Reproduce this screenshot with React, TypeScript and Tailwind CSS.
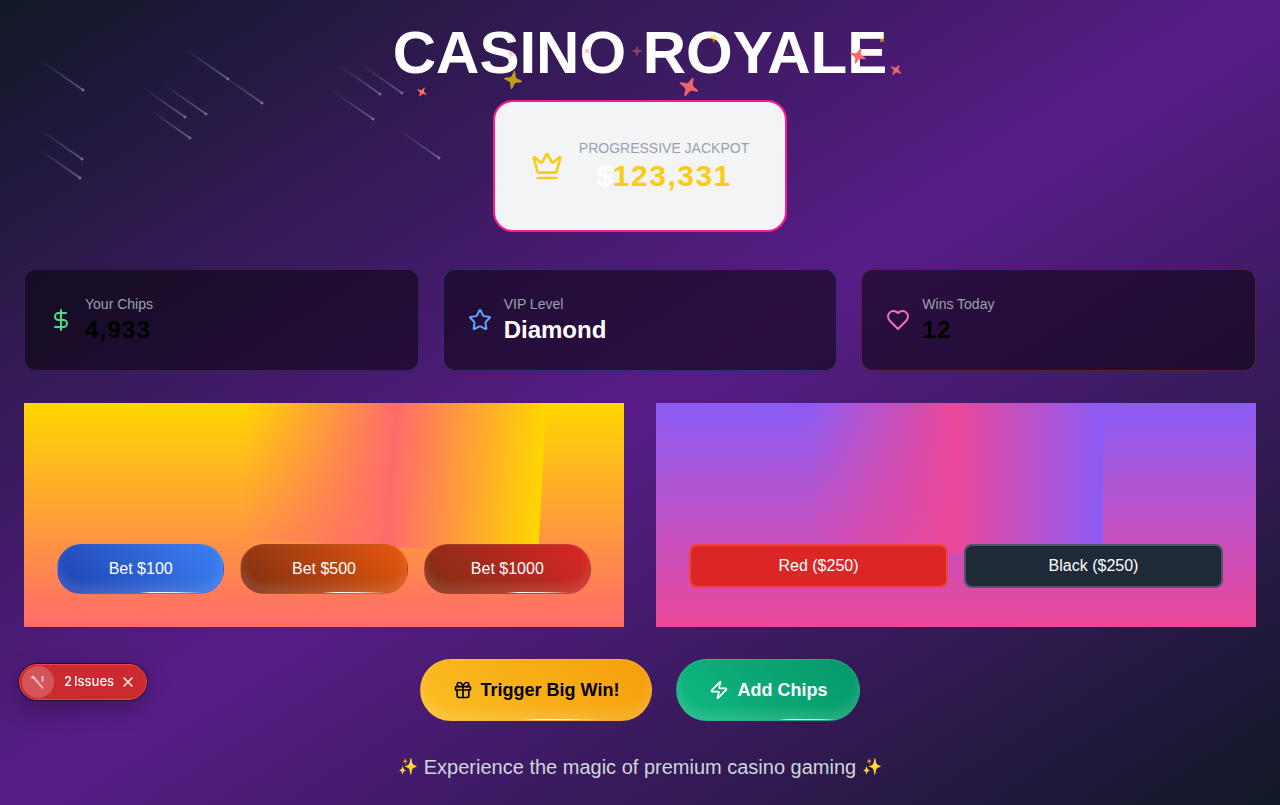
import type { ReactNode } from "react";
import { Crown, DollarSign, Gift, Star, X, Zap } from "lucide-react";

type Point = [number, number];

const METEORS: Point[] = [
  [83, 90], [228, 79], [262, 103], [185, 117], [206, 114], [190, 138],
  [380, 94], [402, 93], [373, 119], [439, 158], [82, 159], [80, 178],
];

const SPARKLES = [
  { x: 422, y: 92, r: 5, turn: 30, color: "#ff6b6b", alpha: 1 },
  { x: 513, y: 80, r: 9, turn: 10, color: "#ffd700", alpha: 0.7 },
  { x: 511, y: 54, r: 4, turn: 30, color: "#ff6b6b", alpha: 0.4 },
  { x: 587, y: 51, r: 3, turn: 45, color: "#ff6b6b", alpha: 0.5 },
  { x: 637, y: 51, r: 5, turn: 0, color: "#ff6b6b", alpha: 0.45 },
  { x: 689, y: 87, r: 10, turn: 25, color: "#ff6b6b", alpha: 0.9 },
  { x: 714, y: 38, r: 5, turn: 5, color: "#ffd700", alpha: 0.5 },
  { x: 787, y: 53, r: 2, turn: 0, color: "#ff6b6b", alpha: 0.45 },
  { x: 858, y: 56, r: 8, turn: 20, color: "#ff6b6b", alpha: 1 },
  { x: 882, y: 40, r: 3, turn: 40, color: "#ffd700", alpha: 0.7 },
  { x: 896, y: 70, r: 6, turn: 35, color: "#ff6b6b", alpha: 0.9 },
];

const SPARKLE_PATH =
  "M9.82531 0.843845C10.0553 0.215178 10.9446 0.215178 11.1746 0.843845L11.8618 2.72026C12.4006 4.19229 12.3916 6.39157 13.5 7.5C14.6084 8.60843 16.8077 8.59935 18.2797 9.13822L20.1561 9.82534C20.7858 10.0553 20.7858 10.9447 20.1561 11.1747L18.2797 11.8618C16.8077 12.4007 14.6084 12.3916 13.5 13.5C12.3916 14.6084 12.4006 16.8077 11.8618 18.2798L11.1746 20.1562C10.9446 20.7858 10.0553 20.7858 9.82531 20.1562L9.13819 18.2798C8.59932 16.8077 8.60843 14.6084 7.5 13.5C6.39157 12.3916 4.19225 12.4007 2.72023 11.8618L0.843814 11.1747C0.215148 10.9447 0.215148 10.0553 0.843814 9.82534L2.72023 9.13822C4.19225 8.59935 6.39157 8.60843 7.5 7.5C8.60843 6.39157 8.59932 4.19229 9.13819 2.72026L9.82531 0.843845Z";

function Meteors() {
  return (
    <svg className="pointer-events-none absolute left-0 top-0" width="520" height="200" aria-hidden="true">
      {METEORS.map(([x, y], i) => (
        <g key={i} transform={`translate(${x} ${y}) rotate(35)`}>
          <rect x="-50" y="-0.8" width="50" height="1.6" fill="url(#meteor-tail)" />
          <circle r="1.5" fill="#64748b" />
        </g>
      ))}
      <defs>
        <linearGradient id="meteor-tail">
          <stop offset="0" stopColor="#64748b" stopOpacity="0" />
          <stop offset="1" stopColor="#64748b" stopOpacity="0.8" />
        </linearGradient>
      </defs>
    </svg>
  );
}

function Sparkles() {
  return (
    <svg
      className="pointer-events-none absolute left-1/2 top-0 -translate-x-1/2"
      width="540"
      height="110"
      viewBox="370 0 540 110"
      aria-hidden="true"
    >
      {SPARKLES.map((s, i) => (
        <path
          key={i}
          transform={`translate(${s.x} ${s.y}) rotate(${s.turn}) scale(${s.r / 10}) translate(-10.5 -10.5)`}
          fill={s.color}
          fillOpacity={s.alpha}
          d={SPARKLE_PATH}
        />
      ))}
    </svg>
  );
}

function HeartIcon() {
  return (
    <svg
      className="size-6 text-[#f472b6]"
      viewBox="0 0 24 24"
      fill="none"
      stroke="currentColor"
      strokeWidth="2"
      strokeLinecap="round"
      strokeLinejoin="round"
      aria-hidden="true"
    >
      <path d="M19 14c1.49-1.46 3-3.21 3-5.5A5.5 5.5 0 0 0 16.5 3c-1.76 0-3 .5-4.5 2-1.5-1.5-2.74-2-4.5-2A5.5 5.5 0 0 0 2 8.5c0 2.3 1.5 4.05 3 5.5l7 7Z" />
    </svg>
  );
}

function StatCard({ icon, label, border, children }: { icon: ReactNode; label: string; border: string; children: ReactNode }) {
  return (
    <div className={`flex items-center gap-3 rounded-xl border bg-black/50 p-6 ${border}`}>
      {icon}
      <div>
        <p className="text-sm text-gray-400">{label}</p>
        {children}
      </div>
    </div>
  );
}

function ShimmerButton({ className, line, children }: { className: string; line: string; children: ReactNode }) {
  return (
    <button
      type="button"
      className={`relative flex items-center justify-center overflow-hidden border border-white/10 shadow-[inset_0_-8px_10px_#ffffff1f] ${className}`}
    >
      {children}
      <span className={`absolute bottom-0 h-px bg-[linear-gradient(90deg,transparent,#fff_20%,#ffffffcc_60%,transparent)] ${line}`} />
    </button>
  );
}

const BET = "flex-1 rounded-3xl px-6 py-3 text-base text-white";
const ACTION = "gap-2 rounded-full px-8 py-4 text-lg font-bold";

export default function App() {
  return (
    <div className="relative min-h-screen overflow-hidden bg-[linear-gradient(to_bottom_right,#111827,#581c87,#111827)] p-6 font-['Liberation_Sans',Arial,sans-serif]">
      <Meteors />

      <header className="mb-[37px] flex flex-col items-center">
        <h1 className="mb-[18px] text-6xl leading-[58px] font-bold text-white">CASINO ROYALE</h1>
        <div className="flex items-center gap-4 rounded-[20px] border-2 border-[#ff1a8c] bg-gray-100 p-9">
          <Crown className="size-8 text-[#facc15]" />
          <div className="text-center">
            <p className="text-sm text-gray-400">PROGRESSIVE JACKPOT</p>
            <p className="text-3xl leading-9 font-bold text-white">
              $<span className="tracking-wider text-[#facc15]">123,331</span>
            </p>
          </div>
        </div>
      </header>
      <Sparkles />

      <section className="mb-8 grid grid-cols-3 gap-6">
        <StatCard label="Your Chips" border="border-[#a855f733]" icon={<DollarSign className="size-6 text-[#4ade80]" />}>
          <p className="text-2xl font-bold tracking-wider text-black">4,933</p>
        </StatCard>
        <StatCard label="VIP Level" border="border-[#3b82f64d]" icon={<Star className="size-6 text-[#60a5fa]" />}>
          <p className="text-2xl font-bold text-white">Diamond</p>
        </StatCard>
        <StatCard label="Wins Today" border="border-[#ef44444d]" icon={<HeartIcon />}>
          <p className="text-2xl font-bold tracking-wider text-black">12</p>
        </StatCard>
      </section>

      <main className="mb-8 grid grid-cols-2 gap-8">
        <section className="relative overflow-hidden bg-[linear-gradient(#ffd700,#ff6b6b)] px-[33px] pt-[141px] pb-[33px]">
          <div className="absolute -top-36 left-[37%] h-72 w-1/2 rotate-3 bg-[linear-gradient(90deg,transparent,#ff6b6b,#ffd700)]" />
          <div className="relative flex gap-4">
            <ShimmerButton className={`${BET} bg-[linear-gradient(45deg,#1e40af,#3b82f6)]`} line="left-[49%] w-16">Bet $100</ShimmerButton>
            <ShimmerButton className={`${BET} bg-[linear-gradient(45deg,#7c2d12,#ea580c)]`} line="left-[49%] w-16">Bet $500</ShimmerButton>
            <ShimmerButton className={`${BET} bg-[linear-gradient(45deg,#7c2d12,#dc2626)]`} line="left-[49%] w-16">Bet $1000</ShimmerButton>
          </div>
        </section>
        <section className="relative overflow-hidden bg-[linear-gradient(#8b5cf6,#ec4899)] px-[33px] pt-[141px] pb-[33px]">
          <div className="absolute -top-[150px] left-1/4 h-[300px] w-[49.5%] bg-[linear-gradient(90deg,transparent,#ec4899,#8b5cf6)]" />
          <div className="relative flex gap-4">
            <button type="button" className="flex-1 rounded-lg border-2 border-[#ef4444] bg-[#dc2626] py-2 text-base text-white">Red ($250)</button>
            <button type="button" className="flex-1 rounded-lg border-2 border-[#4b5563] bg-[#1f2937] py-2 text-base text-white">Black ($250)</button>
          </div>
        </section>
      </main>

      <div className="mb-8 flex justify-center gap-6">
        <ShimmerButton className={`${ACTION} bg-[linear-gradient(45deg,#fbbf24,#f59e0b)] text-black`} line="left-[44%] w-20">
          <Gift className="size-5" />
          Trigger Big Win!
        </ShimmerButton>
        <ShimmerButton className={`${ACTION} bg-[linear-gradient(45deg,#10b981,#059669)] text-white`} line="left-[55%] w-16">
          <Zap className="size-5" />
          Add Chips
        </ShimmerButton>
      </div>

      <footer className="flex items-center justify-center gap-1.5 text-xl leading-7 text-gray-300">
        <span className="text-base">✨</span>
        Experience the magic of premium casino gaming
        <span className="text-base">✨</span>
      </footer>

      <div className="fixed bottom-[105px] left-[19px] flex h-9 items-center rounded-full border border-[#e5484d] bg-[#ca2a30] pr-2.5 pl-0.5 font-[Inter,sans-serif] text-[13px] text-white shadow-[0_0_0_1px_#00000080,0_8px_24px_#00000040]">
        <span className="flex size-8 items-center justify-center rounded-full bg-white/20">
          <svg width="14" height="16" viewBox="0 0 14 16" fill="none" aria-hidden="true">
            <path d="M1.500 2L12 14.500M1.500 2v3M11.500 2v6" stroke="url(#badge-mark)" strokeWidth="2" />
            <defs>
              <linearGradient id="badge-mark" x1="0" y1="0" x2="0" y2="16" gradientUnits="userSpaceOnUse">
                <stop stopColor="#fff" stopOpacity="0.7" />
                <stop offset="1" stopColor="#fff" stopOpacity="0.4" />
              </linearGradient>
            </defs>
          </svg>
        </span>
        <span className="ml-2.5 flex gap-0.5 font-medium">
          <span>2</span>
          <span>Issues</span>
        </span>
        <button type="button" aria-label="Dismiss issues" className="ml-1.5">
          <X className="size-4" />
        </button>
      </div>
    </div>
  );
}
